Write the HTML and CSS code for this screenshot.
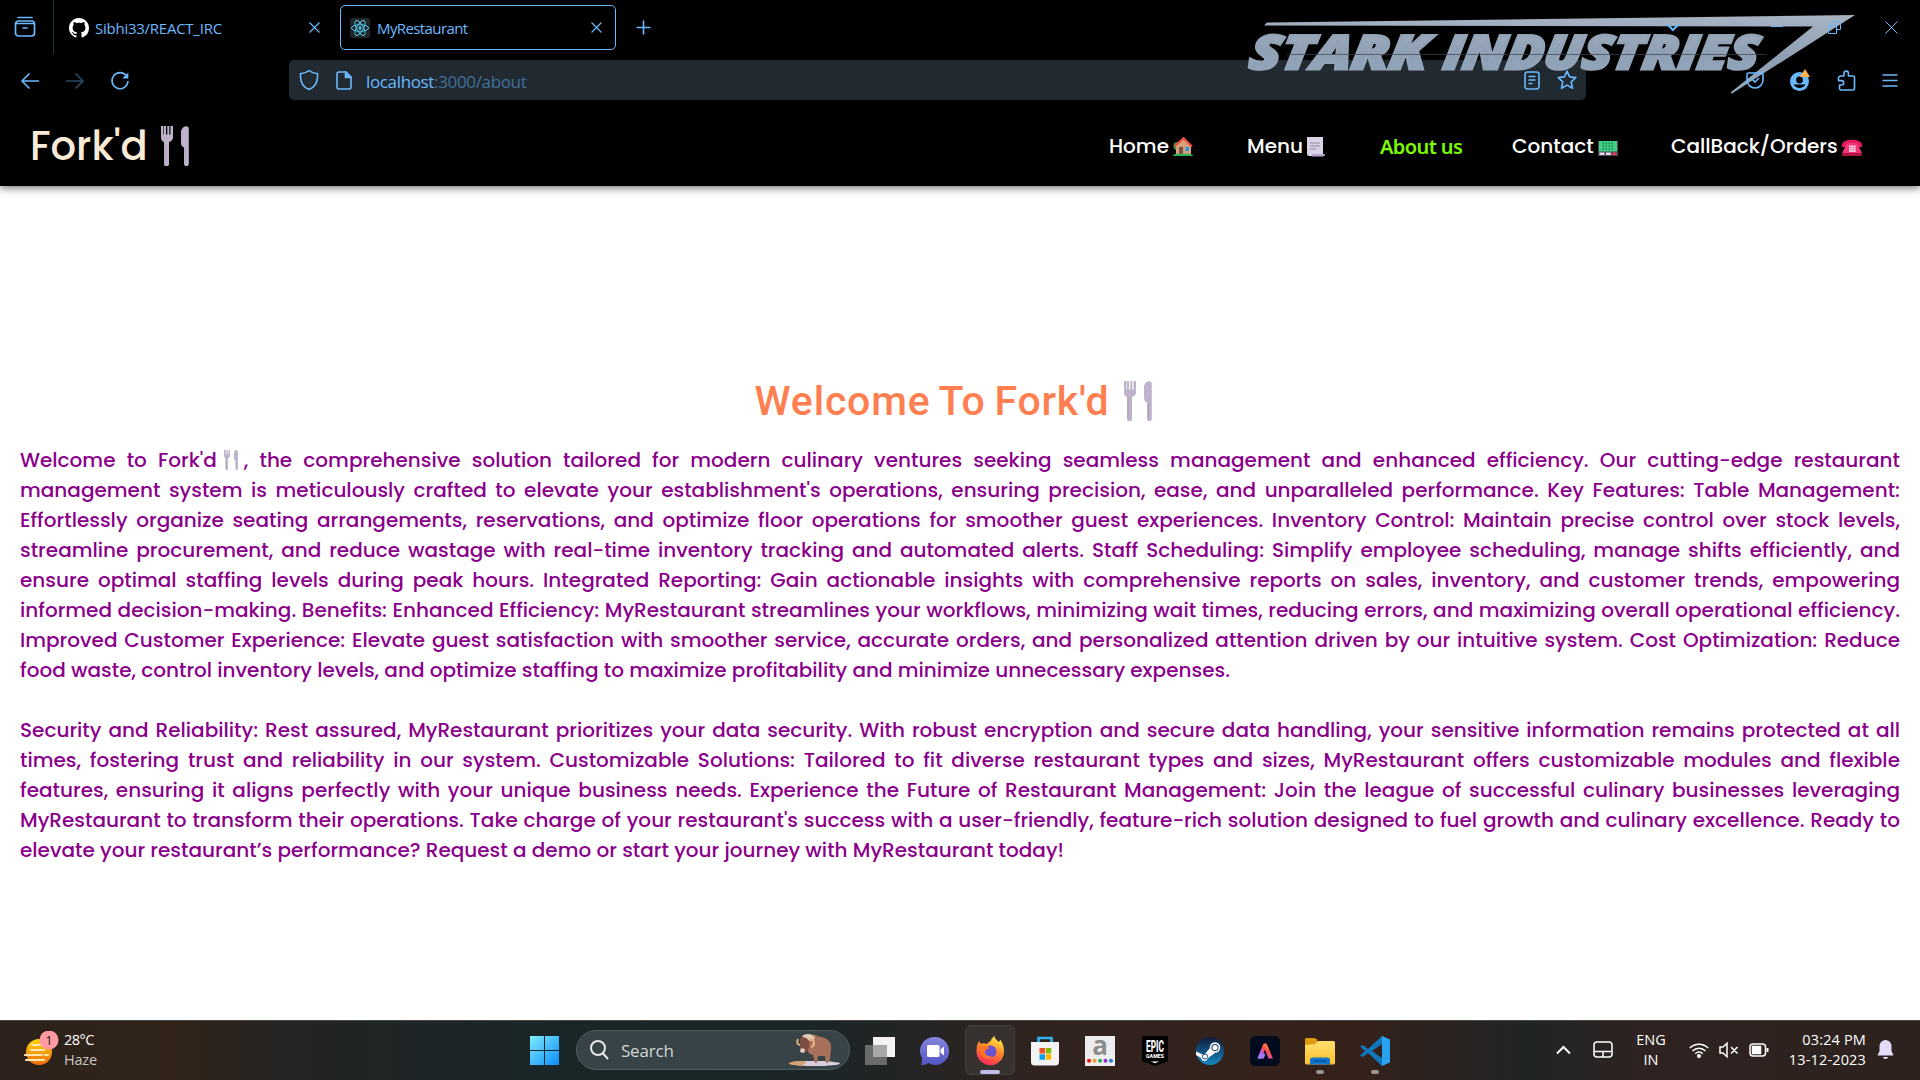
FILE: index.html
```html
<!DOCTYPE html>
<html lang="en">
<head>
<meta charset="utf-8">
<title>MyRestaurant</title>
<link rel="stylesheet" href="styles.css">
</head>
<body>
<svg width="0" height="0" class="defs">
  <defs>
    <symbol id="cutlery" viewBox="0 0 30 40">
      <path d="M1 0v11.500c0 2.500 1.500 4 3 4.500L4 37.500a2 2.500 0 0 0 5 0L9 16c2-.5 4-2 4-4.500V0h-2.500v8.500h-1.200V0H7.300v8.500H6V0H3.800v8.500H3.200V0z" fill="#beb3cb"/>
      <path d="M28.800 2.500c0-3.500-6.500-3.500-7.800 2.500v12c0 2 1 3.500 3 4.500v16a2.200 2.500 0 0 0 4.800 0z" fill="#beb3cb"/>
      <path d="M5 17v20M25.500 22v15" stroke="#a79bb8" stroke-width=".8"/>
    </symbol>
    <linearGradient id="steel" x1="0" y1="0" x2="0" y2="1">
      <stop offset="0" stop-color="#a7b3c3"/><stop offset=".55" stop-color="#8f9fb3"/><stop offset="1" stop-color="#93a9c0"/>
    </linearGradient>
    <linearGradient id="win" x1="0" y1="0" x2="1" y2="1">
      <stop offset="0" stop-color="#80ecff"/><stop offset="1" stop-color="#0a8dfb"/>
    </linearGradient>
    <linearGradient id="sun" x1="0" y1="0" x2="0" y2="1">
      <stop offset="0" stop-color="#ffd60a"/><stop offset="1" stop-color="#f06a10"/>
    </linearGradient>
    <linearGradient id="flame" x1=".7" y1="0" x2=".3" y2="1">
      <stop offset="0" stop-color="#fff04a"/><stop offset=".45" stop-color="#ff8a26"/><stop offset="1" stop-color="#f8245d"/>
    </linearGradient>
    <linearGradient id="chatg" x1="0" y1="0" x2="0" y2="1">
      <stop offset="0" stop-color="#8585dd"/><stop offset="1" stop-color="#5355c4"/>
    </linearGradient>
    <linearGradient id="steamg" x1="0" y1="0" x2="0" y2="1">
      <stop offset="0" stop-color="#101a3a"/><stop offset="1" stop-color="#1489c0"/>
    </linearGradient>
    <linearGradient id="rainbow" x1="0" y1="1" x2="1" y2="0">
      <stop offset="0" stop-color="#3cc3ff"/><stop offset=".3" stop-color="#c05cf0"/><stop offset=".55" stop-color="#ff4a4a"/><stop offset="1" stop-color="#ffd22e"/>
    </linearGradient>
    <linearGradient id="folder" x1="0" y1="0" x2="0" y2="1">
      <stop offset="0" stop-color="#ffe06e"/><stop offset="1" stop-color="#fbc02d"/>
    </linearGradient>
  </defs>
</svg>

<header class="browser">
  <svg class="theme-logo" viewBox="0 0 610 84">
    <path d="M20 12.500 L608 5 L485 83.500 L483.500 82.500 L566 16.500 L17 15.500z" fill="url(#steel)"/>
    <text class="theme-word" transform="translate(0 58.500) skewX(-8)" textLength="178" lengthAdjust="spacingAndGlyphs" x="1" y="0">STARK</text>
    <text class="theme-word" transform="translate(0 58.500) skewX(-8)" textLength="315" lengthAdjust="spacingAndGlyphs" x="195" y="0">INDUSTRIES</text>
    <path d="M40 44.500H520" stroke="#3b4653" stroke-width="1" opacity=".7"/>
  </svg>

  <div class="tabs">
    <div class="tab-manager">
      <svg width="22" height="22" viewBox="0 0 22 22" fill="none" stroke="#6ab9ff" stroke-width="1.700"><path d="M4 1.500h14" stroke-linecap="round"/><path d="M1.500 8a3 3 0 0 1 3-3h13a3 3 0 0 1 3 3v9a3 3 0 0 1-3 3h-13a3 3 0 0 1-3-3zM1.500 7.500h19M8.500 12h5"/></svg>
    </div>
    <div class="tab">
      <svg width="20" height="20" viewBox="0 0 16 16" fill="#fff"><path d="M8 0C3.580 0 0 3.580 0 8c0 3.540 2.290 6.530 5.470 7.590.4.070.55-.17.55-.38 0-.19-.01-.82-.01-1.490-2.010.37-2.530-.49-2.690-.94-.09-.23-.48-.94-.82-1.130-.28-.15-.68-.52-.01-.53.63-.01 1.080.58 1.230.82.72 1.210 1.870.87 2.330.66.070-.52.28-.87.51-1.070-1.780-.2-3.640-.89-3.640-3.950 0-.87.31-1.590.82-2.150-.08-.2-.36-1.020.08-2.120 0 0 .67-.21 2.200.82.64-.18 1.320-.27 2-.27s1.360.09 2 .27c1.530-1.040 2.200-.82 2.200-.82.44 1.100.16 1.920.08 2.120.51.560.82 1.270.82 2.150 0 3.070-1.870 3.750-3.650 3.950.29.250.54.730.54 1.480 0 1.070-.01 1.930-.01 2.200 0 .21.150.46.550.38A8.010 8.010 0 0 0 16 8c0-4.420-3.580-8-8-8z"/></svg>
      <span class="tab-title t-git">Sibhi33/REACT_IRC</span>
      <svg class="close" viewBox="0 0 11 11"><path d="M.5.5l10 10M10.500.5l-10 10"/></svg>
    </div>
    <div class="tab active">
      <svg width="20" height="20" viewBox="0 0 20 20"><rect width="20" height="20" rx="2" fill="#20252b"/><g fill="none" stroke="#53c1de" stroke-width="1"><ellipse cx="10" cy="10" rx="8.500" ry="3.300"/><ellipse cx="10" cy="10" rx="8.500" ry="3.300" transform="rotate(60 10 10)"/><ellipse cx="10" cy="10" rx="8.500" ry="3.300" transform="rotate(120 10 10)"/></g><circle cx="10" cy="10" r="1.700" fill="#53c1de"/></svg>
      <span class="tab-title t-my">MyRestaurant</span>
      <svg class="close" viewBox="0 0 11 11"><path d="M.5.5l10 10M10.500.5l-10 10"/></svg>
    </div>
    <svg class="line plus" width="15" height="15" viewBox="0 0 15 15"><path d="M7.500.5v14M.5 7.500h14"/></svg>
    <div class="window-buttons">
      <svg class="line" width="14" height="9" viewBox="0 0 14 9"><path d="M1 1l6 6 6-6"/></svg>
      <svg class="line thin" width="12" height="12" viewBox="0 0 12 12"><path d="M0 5.500h12"/></svg>
      <svg class="line thin" width="13" height="13" viewBox="0 0 13 13"><path d="M.5 4.500h8v8h-8zM4.500 4.500v-4h8v8h-4"/></svg>
      <svg class="line thin" width="13" height="13" viewBox="0 0 13 13"><path d="M.5.5l12 12M12.500.5l-12 12"/></svg>
    </div>
  </div>

  <div class="toolbar">
    <div class="history">
      <svg class="line" width="20" height="18" viewBox="0 0 20 18"><path d="M19 9H2M9.500 1.500L2 9l7.500 7.500"/></svg>
      <svg class="line dim" width="20" height="18" viewBox="0 0 20 18"><path d="M1 9h17M10.500 1.500L18 9l-7.500 7.500"/></svg>
      <svg class="line" width="20" height="20" viewBox="0 0 20 20"><path d="M16.500 5a8 8 0 1 0 1.500 5"/><path d="M18.300 1.500v6h-6z" fill="#6ab9ff" stroke="none"/></svg>
    </div>
    <div class="urlbar">
      <svg class="line" width="20" height="22" viewBox="0 0 20 22"><path d="M10 1.500c2.500 2 5 3 8.500 3.300C19 12 16.500 18 10 20.500 3.500 18 1 12 1.500 4.800 5 4.500 7.500 3.500 10 1.500z"/></svg>
      <svg class="line" width="16" height="19" viewBox="0 0 16 19"><path d="M10 1H3a2 2 0 0 0-2 2v13a2 2 0 0 0 2 2h10a2 2 0 0 0 2-2V6z"/><path d="M9.500 1v5.500H15z" fill="#6ab9ff"/></svg>
      <span class="url">localhost<span>:3000/about</span></span>
      <svg class="line reader" width="16" height="19" viewBox="0 0 16 19"><rect x="1" y="1" width="14" height="17" rx="2.500"/><path d="M4.500 5.500h7M4.500 9h7M4.500 12.500h4"/></svg>
      <svg class="line" width="20" height="20" viewBox="0 0 20 20"><path stroke-linejoin="round" d="M10 1.200l2.600 5.700 6.200.7-4.600 4.200 1.300 6.500L10 15.100l-5.500 3.200 1.300-6.500L1.200 7.600l6.200-.7z"/></svg>
    </div>
    <div class="extensions">
      <svg class="line" width="18" height="17" viewBox="0 0 18 17"><path d="M2.500 1h13A1.500 1.500 0 0 1 17 2.500V8a8 8 0 0 1-16 0V2.500A1.500 1.500 0 0 1 2.500 1zM5 6l4 4 4-4"/></svg>
      <svg width="20" height="22" viewBox="0 0 20 22"><circle cx="9.500" cy="12.500" r="9.500" fill="#6ab9ff"/><circle cx="9.500" cy="11" r="3.400" fill="#000"/><path d="M3.500 15.500h12a7 7 0 0 1-12 0z" fill="#000"/><path d="M15 0l5 8h-10z" fill="#ffb347"/></svg>
      <svg class="line" width="19" height="21" viewBox="0 0 19 21"><path stroke-linejoin="round" d="M3 6h4V3.300a2.200 2.200 0 0 1 4.400 0V6H16a1.500 1.500 0 0 1 1.500 1.500v11A1.500 1.500 0 0 1 16 20H4a1.500 1.500 0 0 1-1.500-1.500V15h2a2.200 2.200 0 0 0 0-4.400H1.500V7.500z"/></svg>
      <svg class="line" width="16" height="13" viewBox="0 0 16 13"><path d="M.5 1h15M.5 6.500h15M.5 12h15"/></svg>
    </div>
  </div>
</header>

<nav class="site-nav">
  <div class="brand"><span>Fork'd</span><svg width="30" height="40"><use href="#cutlery"/></svg></div>
  <div class="links">
    <a class="l-home">Home<svg viewBox="0 0 20 20"><circle cx="4.500" cy="9" r="4" fill="#2fa15d"/><path d="M3 9l7.500-7L18 9v8H3z" fill="#d7a07b"/><path d="M1.500 9.500L10.500 1 19 9.500" fill="none" stroke="#ef4b36" stroke-width="2"/><path d="M6 10h4v8H6z" fill="#7b4e42"/><path d="M12.500 10H16v4h-3.500z" fill="#2298e5"/><path d="M0 19c1-3 5-2 10-2s9-1 10 2z" fill="#2fb45b"/></svg></a>
    <a class="l-menu">Menu<svg viewBox="0 0 20 20"><path d="M1 0h16v19H3a2 2 0 0 1-2-2z" fill="#dcd2e6"/><path d="M4 6h10M4 9h10M4 12h6" stroke="#8f8799" stroke-width="1.200"/><path d="M6 17h13c0 1.500-1 2.500-2 2.500H6z" fill="#b9a5d3"/></svg></a>
    <a class="l-about">About us</a>
    <a class="l-contact">Contact<svg viewBox="0 0 20 20"><path d="M0 4h20v15H0z" fill="#4d4657"/><path d="M1 4h18v10.500H1z" fill="#3ecf83"/><path d="M4.500 6.500h11M4.500 9.200h11M4.500 12h11" stroke="#1c7a51" stroke-width="1.500" stroke-dasharray="1.500 1.500"/><path d="M1.500 15.500h5V18h-5zM8 15.500h5V18H8z" fill="#e5dcec"/><path d="M14.500 15.500h4V18h-4z" fill="#ef3a5d"/></svg></a>
    <a class="l-call">CallBack/Orders<svg viewBox="0 0 20 20"><path d="M0 8c0-7 20-7 20 0v2h-5V7H5v3H0z" fill="#e21c5b"/><path d="M5 6h10l4.500 9v4h-19v-4z" fill="#f5337a"/><path d="M.5 16h19v3H.5z" fill="#b3133f"/><path d="M7 8.500h6.500v6.500H7z" fill="#fde5ef"/><path d="M7 10.700h6.500M7 12.800h6.500M9 8.500V15M11.300 8.500V15" stroke="#e85b90" stroke-width=".6"/></svg></a>
  </div>
</nav>

<main class="about">
  <h1><span>Welcome To Fork'd</span><svg width="30" height="40"><use href="#cutlery"/></svg></h1>
  <p>
    <span>Welcome to Fork'd<svg class="mini" viewBox="0 0 30 40"><use href="#cutlery"/></svg>, the comprehensive solution tailored for modern culinary ventures seeking seamless management and enhanced efficiency. Our cutting-edge restaurant</span>
    <span>management system is meticulously crafted to elevate your establishment's operations, ensuring precision, ease, and unparalleled performance. Key Features: Table Management:</span>
    <span>Effortlessly organize seating arrangements, reservations, and optimize floor operations for smoother guest experiences. Inventory Control: Maintain precise control over stock levels,</span>
    <span>streamline procurement, and reduce wastage with real-time inventory tracking and automated alerts. Staff Scheduling: Simplify employee scheduling, manage shifts efficiently, and</span>
    <span>ensure optimal staffing levels during peak hours. Integrated Reporting: Gain actionable insights with comprehensive reports on sales, inventory, and customer trends, empowering</span>
    <span>informed decision-making. Benefits: Enhanced Efficiency: MyRestaurant streamlines your workflows, minimizing wait times, reducing errors, and maximizing overall operational efficiency.</span>
    <span>Improved Customer Experience: Elevate guest satisfaction with smoother service, accurate orders, and personalized attention driven by our intuitive system. Cost Optimization: Reduce</span>
    <span class="w1">food waste, control inventory levels, and optimize staffing to maximize profitability and minimize unnecessary expenses.</span>
  </p>
  <p>
    <span>Security and Reliability: Rest assured, MyRestaurant prioritizes your data security. With robust encryption and secure data handling, your sensitive information remains protected at all</span>
    <span>times, fostering trust and reliability in our system. Customizable Solutions: Tailored to fit diverse restaurant types and sizes, MyRestaurant offers customizable modules and flexible</span>
    <span>features, ensuring it aligns perfectly with your unique business needs. Experience the Future of Restaurant Management: Join the league of successful culinary businesses leveraging</span>
    <span>MyRestaurant to transform their operations. Take charge of your restaurant's success with a user-friendly, feature-rich solution designed to fuel growth and culinary excellence. Ready to</span>
    <span class="w2">elevate your restaurant’s performance? Request a demo or start your journey with MyRestaurant today!</span>
  </p>
</main>

<footer class="taskbar">
  <div class="weather">
    <svg width="36" height="36" viewBox="0 0 36 36"><circle cx="15" cy="21" r="13" fill="url(#sun)"/><path d="M8 14h10M7 19h13M1 24h17M21 24h3M2 29h18" stroke="#ffe9b0" stroke-width="2.200" stroke-linecap="round"/><circle cx="25" cy="9" r="9.500" fill="#ff99a4"/><text x="25" y="13.500" text-anchor="middle" class="badge">1</text></svg>
    <div><b>28°C</b><i>Haze</i></div>
  </div>
  <div class="apps">
    <svg class="start" width="29" height="29" viewBox="0 0 29 29"><path d="M0 0h14v14H0zM15 0h14v14H15zM0 15h14v14H0zM15 15h14v14H15z" fill="url(#win)"/></svg>
    <div class="search">
      <svg width="19" height="20" viewBox="0 0 19 20" fill="none" stroke="#e6e8e9" stroke-width="2"><circle cx="8" cy="8" r="7"/><path d="M13 13.500l5 5.500"/></svg>
      <span>Search</span>
      <svg class="ox" width="52" height="34" viewBox="0 0 52 34"><ellipse cx="27" cy="30.500" rx="25" ry="2.600" fill="#d9cfdc"/><path d="M0 31c5-4 13-3 19-2l-6 4z" fill="#d9a06f"/><path d="M21 3c5-3 8 0 12 1 7 1 11 5 10 13l-1 9-2 4h-2l-1-7-7 0-1 7h-2l-2-8c-5-1-6-5-6-8z" fill="#a8705a"/><path d="M15 2c5-2 10-1 12 3l-3 3-10-2z" fill="#e3c9b6"/><path d="M12 5c4-2 8 0 9 4s0 8-4 11c-4 0-5-4-5-8z" fill="#7d4d42"/><path d="M10 6c-2 3 0 6 2 6M22 6c5 0 5 7 1 8" fill="none" stroke="#e7b27c" stroke-width="2"/><path d="M13 15l4 1-1 4-4-1z" fill="#e8cfc0"/></svg>
    </div>
    <div class="app"><svg viewBox="0 0 30 30"><path d="M8 1h22v20H8z" fill="#f3f3f3"/><path d="M0 9h22v20H0z" fill="#777" opacity=".85"/><path d="M8 9h14v12H8z" fill="#a7a7a7"/></svg></div>
    <div class="app"><svg viewBox="0 0 30 30"><path d="M15 1a14 14 0 1 1-7 26c-2 2-5 2-7 2 1-2 1-4 1-7A14 14 0 0 1 15 1z" fill="url(#chatg)"/><rect x="7" y="9" width="12.500" height="12" rx="1.500" fill="#fff"/><path d="M20.500 13.500l3.500-3v9l-3.500-3z" fill="#fff"/></svg></div>
    <div class="app open"><svg viewBox="0 0 30 30"><path d="M1.500 15c0-5 1-8 3-10l1 3c2-1 4-1 6 0l4-3c1-2 2-4 4-5 0 3 3 4 4 6l2-2c3 4 3.500 8 3.500 12a13.700 13.700 0 0 1-27.500-1z" fill="url(#flame)"/><circle cx="15.500" cy="15.500" r="6" fill="#6b50d8"/><path d="M4 11c3-2 7-1 11 1-2 1-5 1-5 4s3 5 7 4c-3 4-12 4-13-9z" fill="#ff7324"/></svg></div>
    <div class="app"><svg viewBox="0 0 30 30"><path d="M8.500 7V2h13v5" fill="none" stroke="#2fb4ee" stroke-width="2.600"/><path d="M1 6h28v20a3.500 3.500 0 0 1-3.500 3.500h-21A3.500 3.500 0 0 1 1 26z" fill="#f4f4f4"/><path d="M9.500 12H15v5.500H9.500z" fill="#f2502a"/><path d="M15.700 12h5.500v5.500h-5.500z" fill="#7fb900"/><path d="M9.500 18.200H15v5.500H9.500z" fill="#05a3ef"/><path d="M15.700 18.200h5.500v5.500h-5.500z" fill="#feb800"/></svg></div>
    <div class="app"><svg viewBox="0 0 30 30"><path d="M0 0h30v30H0z" fill="#ededed"/><text x="15" y="19" text-anchor="middle" class="ama">a</text><circle cx="4" cy="24.700" r="2" fill="#e11"/><circle cx="9.500" cy="24.700" r="2" fill="#f59b23"/><circle cx="15" cy="24.700" r="2" fill="#27ae60"/><circle cx="20.500" cy="24.700" r="2" fill="#9333cc"/><circle cx="26" cy="24.700" r="2" fill="#1e80d8"/></svg></div>
    <div class="app"><svg viewBox="0 0 30 30"><path d="M3.500 0h23a1.500 1.500 0 0 1 1.500 1.500V25l-13 5L2 25V1.500A1.500 1.500 0 0 1 3.500 0z" fill="#000"/><text x="6" y="16" textLength="18" lengthAdjust="spacingAndGlyphs" class="epic">EPIC</text><text x="6" y="22.200" textLength="18" lengthAdjust="spacingAndGlyphs" class="games">GAMES</text><path d="M10.500 25.500h9L15 27.300z" fill="#fff"/></svg></div>
    <div class="app"><svg viewBox="0 0 30 30"><circle cx="15" cy="15" r="14" fill="url(#steamg)"/><path d="M1 15.500l8 3.500 6-7 5 5-7 5c-1 4-6 4-7 0L1 19z" fill="#fff"/><circle cx="20" cy="11.500" r="5.200" fill="#fff"/><circle cx="20" cy="11.500" r="3.600" fill="#17335f"/><circle cx="20" cy="11.500" r="2.600" fill="#fff"/><circle cx="10" cy="20.500" r="2.600" fill="none" stroke="#17507f"/></svg></div>
    <div class="app"><svg viewBox="0 0 30 30"><rect width="30" height="30" rx="5.500" fill="#000b1d"/><path d="M7.500 22.500L13 8.500q2-2.500 4 0l6 14h-4.500l-3.600-9-3.200 9z" fill="url(#rainbow)"/><path d="M7.500 22.500l1.800-4.500 6-.5-1.300 5z" fill="#a678f5"/></svg></div>
    <div class="app run"><svg viewBox="0 0 30 30"><path d="M0 3.500A1.500 1.500 0 0 1 1.500 2H10l3 3.500H0z M0 3h12v6H0z" fill="#dc9a0c"/><path d="M0 9l10-1 3-3h15.500A1.500 1.500 0 0 1 30 6.500V27a1.500 1.500 0 0 1-1.500 1.500h-27A1.500 1.500 0 0 1 0 27z" fill="url(#folder)"/><path d="M5 28.500V24a2.500 2.500 0 0 1 2.500-2.500h15A2.500 2.500 0 0 1 25 24v4.500z" fill="#1078cf"/><path d="M8.500 25h13" stroke="#0a4f91" stroke-width="1.500"/></svg></div>
    <div class="app run"><svg viewBox="0 0 30 30"><path d="M22 0L8 13 3 9 0 10.500 5 15l-5 4.500L3 21l5-4 14 13V22L12 15l10-7z" fill="#1177bd"/><path d="M22 0l8 3.500v23L22 30z" fill="#2aa3f0"/></svg></div>
  </div>
  <div class="tray">
    <svg width="15" height="10" viewBox="0 0 15 10" class="caret"><path d="M1 8.500l6.500-6.500L14 8.500"/></svg>
    <svg width="20" height="17" viewBox="0 0 20 17" class="status"><rect x="1" y="1" width="18" height="15" rx="3"/><path d="M1 10.500h18M10 10.500V16"/></svg>
    <div class="lang"><span>ENG</span><span>IN</span></div>
    <svg width="20" height="16" viewBox="0 0 20 16" class="status"><path d="M.8 6a13 13 0 0 1 18.400 0M3.500 9a9 9 0 0 1 13 0M6.300 11.700a5 5 0 0 1 7.400 0"/><circle cx="10" cy="14" r="1.300" fill="#fff"/></svg>
    <svg width="20" height="16" viewBox="0 0 20 16" class="status"><path d="M1 5h3l4-3.700v13.400L4 11H1zM12 5l6.500 6.500M18.500 5L12 11.500"/></svg>
    <svg width="20" height="14" viewBox="0 0 20 14" class="status"><rect x="1" y="1" width="15.500" height="12" rx="3"/><path d="M3.500 3.500h8v7h-8z" fill="#fff"/><path d="M18.500 5v4" stroke-width="2"/></svg>
    <div class="clock"><span>03:24 PM</span><span>13-12-2023</span></div>
    <svg width="17" height="20" viewBox="0 0 17 20"><path d="M8.500 0a6 6 0 0 1 6 6v5l2 4.500H.5L2.500 11V6a6 6 0 0 1 6-6zM6 17h5a2.500 2 0 0 1-5 0z" fill="#e4dcf6"/></svg>
  </div>
</footer>
</body>
</html>
```
FILE: styles.css
```css
* { box-sizing: border-box; }
body {
  margin: 0;
  width: 1920px;
  height: 1080px;
  overflow: hidden;
  display: flex;
  flex-direction: column;
  background: #fff;
  font-family: "Open Sans", "Noto Sans", sans-serif;
}
.defs { position: absolute; }
svg { display: block; flex: none; }

/* Browser chrome */
.browser { position: relative; height: 106px; background: #000; flex: none; }
.theme-logo { position: absolute; left: 1247px; top: 10px; width: 610px; height: 84px; z-index: 1; }
.theme-word { font: italic 800 47px "Open Sans", sans-serif; fill: url(#steel); stroke: #93a3b7; stroke-width: 2.8px; }
.line { fill: none; stroke: #6ab9ff; stroke-width: 1.6; position: relative; z-index: 2; }
.thin { stroke-width: 1; }
.dim { opacity: .4; }
.close { width: 11px; height: 11px; fill: none; stroke: #6ab9ff; stroke-width: 1.2; margin-left: auto; }
.tabs { display: flex; height: 54px; align-items: center; }
.tab-manager { width: 54px; height: 54px; padding: 16px 0 0 14px; border-right: 1px solid #1d3140; }
.tab {
  width: 276px;
  height: 45px;
  display: flex;
  align-items: center;
  gap: 7px;
  padding: 0 13px 0 9px;
  margin-left: 6px;
  margin-top: 1px;
  border: 1px solid transparent;
  border-radius: 5px;
}
.tab:not(.active) { padding: 0 15px 0 8px; }
.tab.active { border-color: #6ab9ff; margin-left: 4px; }
.tab-title { color: #6ab9ff; font-size: 15px; line-height: 20px; white-space: nowrap; }
.t-git { letter-spacing: -.25px; margin-left: -1px; }
.t-my { letter-spacing: -.6px; }
.plus { margin-left: 20px; margin-top: 1px; }
.window-buttons { display: flex; align-items: center; margin-left: auto; margin-right: 22px; }
.window-buttons svg:first-child { stroke-width: 2; }
.window-buttons svg + svg { margin-left: 44px; }
.window-buttons svg:nth-child(2) { margin-left: 91px; }
.window-buttons svg:nth-child(3) { margin-left: 45px; }

.toolbar { display: flex; align-items: center; height: 52px; }
.history { display: flex; align-items: center; gap: 25px; padding-left: 20px; width: 289px; padding-top: 1px; }
.urlbar {
  display: flex;
  align-items: center;
  width: 1297px;
  height: 40px;
  padding: 0 9px 0 10px;
  border-radius: 5px;
  background: #202a30;
}
.urlbar .line + .line { margin-left: 17px; }
.url { margin: 3px 0 0 14px; color: #6ab9ff; font-size: 17px; line-height: 24px; letter-spacing: -.35px; }
.url span { color: #42709a; }
.urlbar .reader { margin-left: auto; }
.extensions { display: flex; align-items: center; margin-left: auto; padding-right: 22px; gap: 26.3px; position: relative; z-index: 2; }

/* Site navigation */
.site-nav {
  position: relative;
  display: flex;
  align-items: center;
  justify-content: space-between;
  flex: none;
  height: 80px;
  padding: 0 58px 0 30px;
  background: #000;
  box-shadow: 0 2px 8px rgba(0, 0, 0, .55);
  font-family: Poppins, Inter, sans-serif;
  font-feature-settings: "cv11";
  font-weight: 500;
}
.brand { display: flex; align-items: center; gap: 12px; color: #faebd7; font-size: 40px; }
.links { display: flex; align-items: center; color: #fff; font-size: 20px; }
.links a { display: flex; align-items: center; justify-content: space-between; white-space: nowrap; }
.links svg { width: 20px; height: 20px; margin-top: 1px; }
.l-home { width: 84px; margin-right: 54px; }
.l-menu { width: 79px; margin-right: 54px; }
.links .l-about { width: 83px; margin-right: 49px; color: #7cfc00; font-family: "Noto Sans", sans-serif; font-weight: 600; font-size: 20px; letter-spacing: -.6px; }
.l-contact { width: 106px; margin-right: 53px; }
.l-call { width: 191px; }

/* About page */
.about { flex: 1; padding: 189px 20px 0; }
h1 {
  display: flex;
  justify-content: center;
  align-items: center;
  gap: 14px;
  margin: 0 12px 18px 0;
  height: 52px;
  color: #ff7f50;
  font: 490 41px Roboto, sans-serif;
  letter-spacing: .8px;
  word-spacing: -2px;
}
.about p {
  margin: 0 0 30px;
  color: #8b008b;
  font: 500 20px/30px Poppins, Inter, sans-serif;
  font-feature-settings: "cv11";
  word-spacing: -1.5px;
}
.about p span { display: block; height: 30px; text-align: justify; text-align-last: justify; }
.about .w1 { width: 1210px; }
.about .w2 { width: 1044px; }
.mini { display: inline-block; width: 16px; height: 20px; margin: 0 5px 0 6px; vertical-align: -3px; }

/* Taskbar */
.taskbar {
  display: flex;
  align-items: center;
  flex: none;
  height: 60px;
  border-top: 1px solid #494644;
  background: linear-gradient(90deg, #2c221b 0, #31231a 180px, #232424 300px, #192628 560px, #1b2527 820px, #30231f 1040px, #36211a 1350px, #202425 1530px, #2e2320 1640px, #2e221f 1920px);
  color: #fff;
  font-size: 14.5px;
}
.weather { display: flex; gap: 4px; padding-left: 24px; width: 530px; align-items: center; }
.weather svg { margin-top: -4px; }
.weather div { margin-top: -2px; }
.weather b, .weather i { display: block; font-style: normal; font-weight: 400; line-height: 20px; letter-spacing: -.2px; }
.weather b { letter-spacing: -.5px; }
.weather i { color: #c9c5c2; }
.badge { font: 13px "Open Sans", sans-serif; fill: #222; }
.apps { display: flex; align-items: center; }
.start { margin-top: -1px; }
.search {
  display: flex;
  align-items: center;
  width: 274px;
  height: 40px;
  margin: -1px 5px 0 17px;
  padding: 0 9px 0 13px;
  border: 1px solid #4e5c60;
  border-radius: 20px;
  background: #374346;
}
.search span { margin-left: 12px; color: #d3d6d7; font-size: 17px; letter-spacing: -.2px; }
.ox { margin-left: auto; }
.app { position: relative; width: 50px; height: 50px; margin: -1px 5px 0 0; display: flex; justify-content: center; padding-top: 10px; border-radius: 6px; border: 1px solid transparent; }
.app svg { width: 30px; height: 30px; }
.app.open { background: #373130; border-color: #433d3b; }
.app.open::after, .app.run::after { content: ""; position: absolute; bottom: 0; left: 14px; width: 20px; height: 4px; border-radius: 2px; background: #c4bdea; }
.app.run::after { left: 20px; width: 8px; background: #9c9492; }
.ama { font: 700 26px "Open Sans", sans-serif; fill: #8d8d8d; }
.epic { font: 800 16px "Roboto", sans-serif; fill: #fff; }
.games { font: 800 5.5px "Roboto", sans-serif; fill: #fff; }
.tray { display: flex; align-items: center; margin: -2px 26px 0 auto; }
.caret { fill: none; stroke: #fff; stroke-width: 2; margin-right: 22px; }
.status { fill: none; stroke: #fff; stroke-width: 1.5; }
.lang { width: 56px; margin: 0 10px; text-align: center; }
.lang span, .clock span { display: block; line-height: 20px; }
.tray .status + .status { margin-left: 10px; }
.clock { width: 97px; margin-right: 11px; text-align: right; letter-spacing: .15px; }
```
